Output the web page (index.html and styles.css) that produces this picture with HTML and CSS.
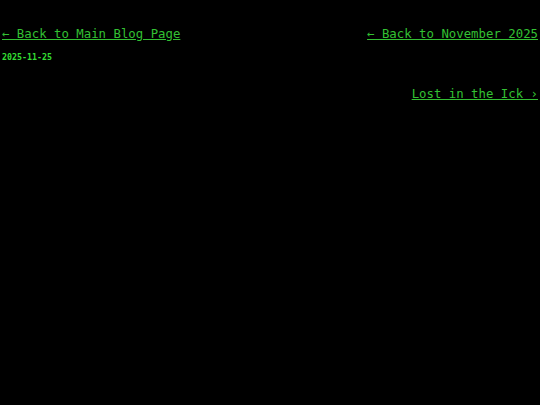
FILE: index.html
```html
<!DOCTYPE html>
<html>
<head>
<meta charset="utf-8">
<link rel="stylesheet" href="styles.css">
</head>
<body>
<div class="page">
  <nav class="topnav">
    <a class="link" href="#">← Back to Main Blog Page</a>
    <a class="link" href="#">← Back to November 2025</a>
  </nav>
  <div class="date">2025-11-25</div>
  <nav class="postnav">
    <a class="link" href="#">Lost in the Ick ›</a>
  </nav>
</div>
</body>
</html>
```

FILE: styles.css
```css
html, body {
  margin: 0;
  padding: 0;
  background: #000;
}
body {
  font-family: "DejaVu Sans Mono", monospace;
  color: #33cc33;
}
.page {
  padding: 25px 2px 0 2px;
}
.topnav {
  display: flex;
  justify-content: space-between;
  font-size: 12.35px;
  line-height: 18px;
}
.link {
  color: #33c033;
  text-decoration: underline;
}
.date {
  margin-top: 8px;
  font-size: 8.3px;
  font-weight: bold;
  color: #33dd33;
  line-height: 12px;
}
.postnav {
  margin-top: 22px;
  display: flex;
  justify-content: flex-end;
  font-size: 12.35px;
  line-height: 18px;
}
```
